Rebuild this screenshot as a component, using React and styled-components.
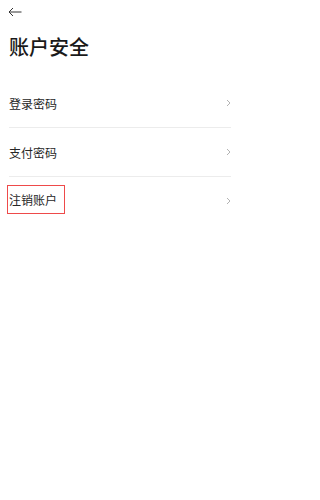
import React from 'react';
import styled, { createGlobalStyle } from 'styled-components';

const GlobalStyle = createGlobalStyle`
  html, body {
    margin: 0;
    padding: 0;
    background: #ffffff;
  }
  body {
    font-family: "Noto Sans CJK SC", "Noto Sans", sans-serif;
    color: #222222;
  }
`;

const Page = styled.div`
  width: 240px;
  min-height: 500px;
  background: #ffffff;
`;

const TopBar = styled.div`
  height: 24px;
  display: flex;
  align-items: center;
  padding-left: 8px;
`;

const BackButton = styled.button`
  width: 16px;
  height: 16px;
  padding: 0;
  border: none;
  background: none;
  display: flex;
  align-items: center;
  cursor: pointer;
`;

const Title = styled.h1`
  margin: 0;
  padding: 9px 9px 0;
  height: 44px;
  font-size: 20px;
  font-weight: 500;
  line-height: 28px;
  color: #1a1a1a;
  box-sizing: border-box;
`;

const List = styled.div`
  padding: 11px 9px 0;
`;

const Row = styled.div`
  height: 48px;
  display: flex;
  align-items: center;
  justify-content: space-between;
  border-bottom: ${(p) => (p.last ? 'none' : '1px solid #ececec')};
  cursor: pointer;
`;

const Label = styled.span`
  font-size: 12px;
  line-height: 27px;
  color: #262626;
  ${(p) =>
    p.highlighted &&
    `
    margin-left: -2px;
    margin-top: -3px;
    padding: 0 7px 0 1px;
    border: 1px solid #ee4a4a;
  `}
`;

const Chevron = () => (
  <svg width="5" height="8" viewBox="0 0 5 8" fill="none">
    <path d="M1 1l3 3-3 3" stroke="#b3b3b3" strokeWidth="1" />
  </svg>
);

const BackArrow = () => (
  <svg width="14" height="10" viewBox="0 0 14 10" fill="none">
    <path d="M13.5 5H1M5 1L1 5l4 4" stroke="#333" strokeWidth="1" />
  </svg>
);

const items = [
  { label: '登录密码' },
  { label: '支付密码' },
  { label: '注销账户', highlighted: true },
];

export default function App() {
  return (
    <Page>
      <GlobalStyle />
      <TopBar>
        <BackButton aria-label="返回">
          <BackArrow />
        </BackButton>
      </TopBar>
      <Title>账户安全</Title>
      <List>
        {items.map((item, i) => (
          <Row key={item.label} last={i === items.length - 1}>
            <Label highlighted={item.highlighted}>{item.label}</Label>
            <Chevron />
          </Row>
        ))}
      </List>
    </Page>
  );
}
